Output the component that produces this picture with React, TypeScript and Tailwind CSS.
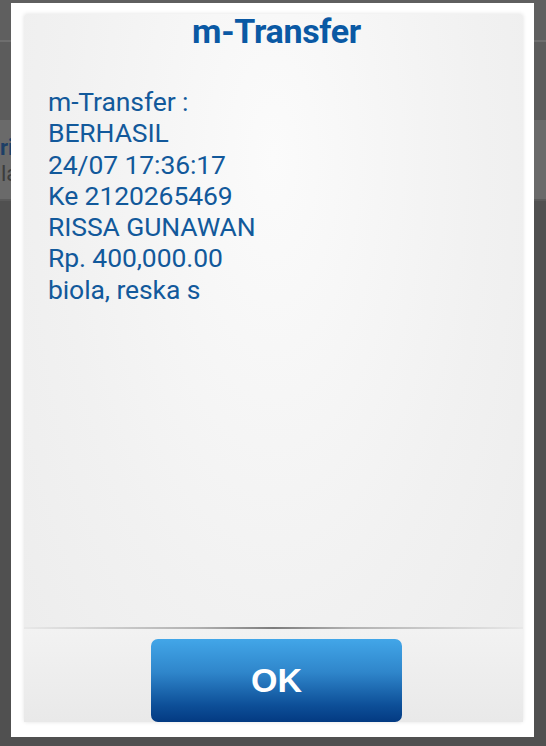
export default function App() {
  const lines = [
    'm-Transfer :',
    'BERHASIL',
    '24/07 17:36:17',
    'Ke 2120265469',
    'RISSA GUNAWAN',
    'Rp. 400,000.00',
    'biola, reska s',
  ]

  return (
    <div className="relative w-[546px] h-[746px] overflow-hidden bg-[#505050] font-['Roboto',sans-serif]">
      {/* Background app behind the dialog */}
      <div className="flex flex-col">
        <div className="h-[42px] bg-[#5f5f5f] border-b-2 border-[#6e6e6e]" />
        <div className="h-[80px] bg-[#5c5c5c] border-b-2 border-[#6a6a6a]" />
        <div className="h-[79px] bg-[#6a6a6a] flex flex-col justify-center border-b-2 border-[#5a5a5a]">
          <div className="text-[22px] leading-[26px] font-bold text-[#1d3f66] whitespace-nowrap">rif</div>
          <div className="text-[22px] leading-[26px] text-[#3c3c3c] whitespace-nowrap pl-[1px]">la</div>
        </div>
      </div>

      {/* Dialog */}
      <div className="absolute left-[11px] top-[3px] w-[523px] h-[734px] bg-white p-[11px_11px_15px_13px] flex">
        <div className="flex-1 flex flex-col rounded-[3px] bg-[radial-gradient(ellipse_at_50%_20%,#fbfbfb_0%,#f1f1f1_60%,#ececec_100%)] shadow-[0_0_4px_rgba(0,0,0,0.12)]">
          <h1 className="text-center pl-[6px] -mt-[2px] text-[34px] leading-[38px] font-bold text-[#0a59a4] tracking-[-0.3px]">
            m-Transfer
          </h1>
          <div className="mt-[36px] pl-[24px] text-[#12599b] text-[26.5px] leading-[31.3px] tracking-[-0.1px]">
            {lines.map(l => (
              <div key={l}>{l}</div>
            ))}
          </div>
          <div className="flex-1" />
          <div className="h-[2px] bg-[linear-gradient(90deg,#e8e8e8_0%,#b0b0b0_35%,#7d7d7d_50%,#b0b0b0_65%,#e8e8e8_100%)]" />
          <div className="flex justify-center pl-[6px] pt-[10px] bg-[linear-gradient(180deg,#f2f2f2,#e9e9e9)]">
            <button className="w-[251px] h-[83px] rounded-[7px] bg-[linear-gradient(180deg,#42a6e8_0%,#2f86cb_40%,#0d4f98_80%,#033a82_100%)] text-white text-[34px] font-bold font-['Liberation_Sans',Arial,sans-serif]">
              OK
            </button>
          </div>
        </div>
      </div>
    </div>
  )
}
